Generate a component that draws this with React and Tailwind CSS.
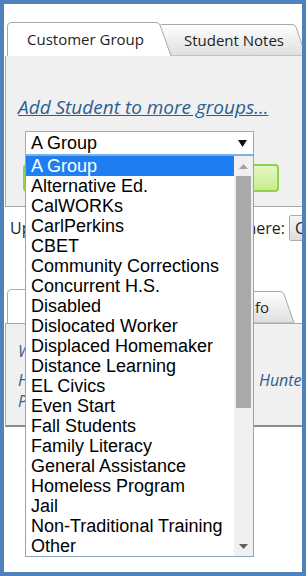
import React from 'react'

const groups = [
  'A Group',
  'Alternative Ed.',
  'CalWORKs',
  'CarlPerkins',
  'CBET',
  'Community Corrections',
  'Concurrent H.S.',
  'Disabled',
  'Dislocated Worker',
  'Displaced Homemaker',
  'Distance Learning',
  'EL Civics',
  'Even Start',
  'Fall Students',
  'Family Literacy',
  'General Assistance',
  'Homeless Program',
  'Jail',
  'Non-Traditional Training',
  'Other',
]

const ui = { fontFamily: '"Open Sans", "Noto Sans", sans-serif' }
const arial = { fontFamily: '"Liberation Sans", Arial, sans-serif' }

function ActiveTab({ width, children }) {
  return (
    <div className="relative z-10 h-[34px] shrink-0" style={{ width }}>
      <svg className="absolute inset-0" width={width} height="34">
        <path
          d={`M0.5 34 V5 Q0.5 0.5 5 0.5 H${width - 16} Q${width - 13} 0.5 ${width - 12} 3 L${width - 1} 34`}
          fill="#ffffff"
          stroke="#a9a9a9"
        />
      </svg>
      <div className="relative flex h-full items-center justify-center pl-[4px] pr-[12px] text-[15px] text-[#1e1e1e]">
        {children}
      </div>
    </div>
  )
}

function InactiveTab({ width, children, textClass = 'justify-center pr-[14px]' }) {
  return (
    <div className="relative -ml-[14px] h-[32px] shrink-0" style={{ width }}>
      <svg className="absolute inset-0" width={width} height="32">
        <defs>
          <linearGradient id="tabg" x1="0" y1="0" x2="0" y2="1">
            <stop offset="0" stopColor="#ffffff" />
            <stop offset="1" stopColor="#dedede" />
          </linearGradient>
        </defs>
        <path
          d={`M0.5 32 V4 Q0.5 0.5 4 0.5 H${width - 16} Q${width - 13} 0.5 ${width - 12} 3 L${width - 2} 32 Z`}
          fill="url(#tabg)"
          stroke="#a9a9a9"
        />
      </svg>
      <div className={`relative flex h-full items-center pl-[16px] text-[15px] text-[#1e1e1e] ${textClass}`}>
        {children}
      </div>
    </div>
  )
}

function Dropdown() {
  return (
    <div className="absolute left-0 top-full z-30 flex h-[402px] w-full border border-[#8fa6bf] bg-white" style={arial}>
      <div className="flex-1">
        {groups.map((g, i) => (
          <div
            key={g}
            className={`h-[20px] pl-[5px] text-[18px] leading-[20px] whitespace-nowrap ${
              i === 0 ? 'bg-[#1e7ef2] text-white' : 'text-black'
            }`}
          >
            {g}
          </div>
        ))}
      </div>
      <div className="flex w-[19px] flex-col items-center bg-[#f0f0f0]">
        <div className="flex h-[20px] items-center justify-center">
          <svg width="9" height="5"><path d="M0 5 L4.5 0 L9 5 Z" fill="#a3a3a3" /></svg>
        </div>
        <div className="h-[232px] w-[15px] bg-[#a9a9a9]" />
        <div className="flex-1" />
        <div className="flex h-[20px] items-center justify-center">
          <svg width="9" height="5"><path d="M0 0 L9 0 L4.5 5 Z" fill="#606060" /></svg>
        </div>
      </div>
    </div>
  )
}

export default function App() {
  return (
    <div className="h-[576px] w-[308px] bg-white">
      <div className="relative h-[576px] w-[306px] overflow-hidden border-4 border-[#4f81bd] bg-white" style={ui}>
        {/* top tabs */}
        <div className="mt-[18px] flex items-end pl-[3px]">
          <ActiveTab width={165}>Customer Group</ActiveTab>
          <InactiveTab width={150}>Student Notes</InactiveTab>
        </div>

        <div className="ml-[1px] h-[151px] border-b border-l border-[#a9a9a9] bg-[#f0f0f0] pt-[40px]">
          <a className="ml-[12px] block whitespace-nowrap text-[19px] leading-[22px] italic text-[#2b5f91] underline">
            Add Student to more groups...
          </a>
          <div className="relative ml-[19px] mt-[13px] w-[229px]">
            <div className="flex h-[24px] items-center justify-between border border-[#7eb4ea] bg-white pl-[5px] pr-[6px] text-[18px] text-black" style={arial}>
              <span>A Group</span>
              <svg width="9" height="7"><path d="M0 0 L9 0 L4.5 7 Z" fill="#111" /></svg>
            </div>
            <Dropdown />
          </div>
          <div className="ml-[17px] mt-[9px] h-[28px] w-[256px] rounded-[4px] border-2 border-[#8fd24c] bg-gradient-to-b from-[#e4f7c4] to-[#c6ec8e]" />
        </div>

        {/* upload row */}
        <div className="mt-[8px] flex w-[350px] items-center justify-between pl-[6px] text-[16px] text-[#1e1e1e]">
          <span>Upload</span>
          <div className="flex items-center gap-[4px]">
            <span>Select file here:</span>
            <div className="flex h-[26px] w-[65px] items-center rounded-[2px] border border-[#adadad] bg-gradient-to-b from-[#f6f6f6] to-[#dddddd] pl-[5px] text-[16px]">
              Choose
            </div>
          </div>
        </div>

        {/* second tabs */}
        <div className="mt-[48px] flex items-end pl-[3px]">
          <ActiveTab width={150}>General</ActiveTab>
          <InactiveTab width={153} textClass="justify-end pr-[27px]">Contact Info</InactiveTab>
        </div>
        <div className="ml-[1px] h-[104px] border-t border-l border-b-2 border-t-[#a9a9a9] border-l-[#a9a9a9] border-b-[#8c8c8c] bg-[#f0f0f0] pl-[12px] pt-[17px] text-[16px] italic text-[#2b5f91]">
          <div className="leading-[20px]">Work Address</div>
          <div className="mt-[9px] flex leading-[20px]">
            <span className="w-[241px] shrink-0">Home: 1204 Oak Street</span>
            <span className="whitespace-nowrap">Hunter Valley</span>
          </div>
          <div className="mt-[1px] leading-[20px]">Phone: (555) 012-3344</div>
        </div>
      </div>
    </div>
  )
}
